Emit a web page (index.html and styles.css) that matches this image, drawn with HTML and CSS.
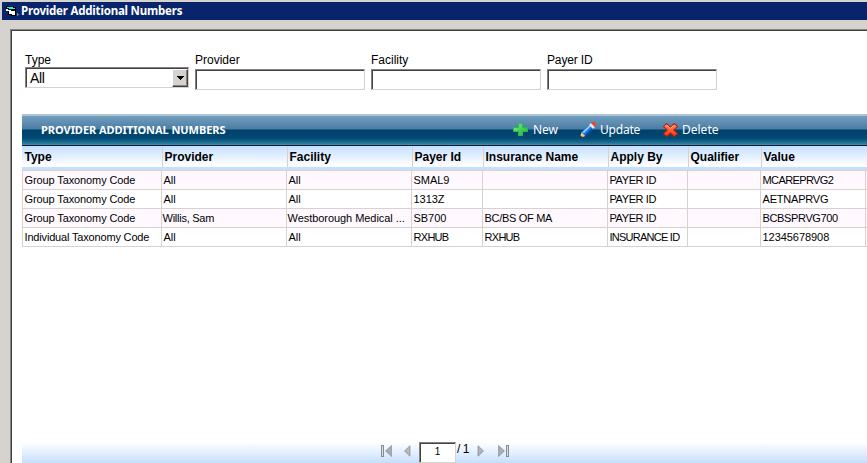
FILE: index.html
```html
<!DOCTYPE html>
<html lang="en">
<head>
<meta charset="utf-8">
<title>Provider Additional Numbers</title>
<link rel="stylesheet" href="styles.css">
</head>
<body>
<div class="window">
  <header class="titlebar">
    <svg class="app-icon" width="13" height="11" viewBox="0 0 13 11" shape-rendering="crispEdges"><path fill="#000" d="M0 0h8v1h2v9H5V9H2V5H0z"/><path fill="#0ff" d="M1 1h6v1H1zM3 2h6v1H3z"/><path fill="#fff" d="M0 3h2v1h3v1h4v4H6V8H3V5H0z"/><path fill="#848284" d="M11 7h1v1h1v1h-1v1h-1z"/></svg>
    <span>Provider Additional Numbers</span>
  </header>
  <main class="panel">
    <form class="filters">
      <div class="field type"><label>Type</label><div class="select"><span>All</span><i class="drop"><svg width="7" height="4" viewBox="0 0 7 4" shape-rendering="crispEdges"><path d="M0 0h7v1H6v1H5v1H4v1H3V3H2V2H1V1H0z"/></svg></i></div></div>
      <div class="field"><label>Provider</label><div class="input"></div></div>
      <div class="field"><label>Facility</label><div class="input"></div></div>
      <div class="field payer"><label>Payer ID</label><div class="input"></div></div>
    </form>
    <section class="grid">
      <div class="toolbar">
        <h1>PROVIDER ADDITIONAL NUMBERS</h1>
        <div class="action new"><svg width="15" height="15" viewBox="0 0 15 15"><defs><linearGradient id="g" x2="1" y2="1"><stop stop-color="#8bea8b"/><stop offset="1" stop-color="#09b528"/></linearGradient></defs><path fill="url(#g)" stroke="#28b858" d="M5.500 1.500h4v4h5v4h-5v4h-4v-4h-5v-4h5z"/></svg><span>New</span></div>
        <div class="action update"><svg width="16" height="16" viewBox="0 0 16 16"><path fill="#f2c98e" d="M1.500 10L5.500 14 1 15.500H0z"/><path fill="#1878e8" d="M1.500 10l8.500-8 4 4-8.500 8z"/><path fill="#8fd0ff" d="M2.500 10L10 2.800l1.200 1.200L3.700 11.200z"/><path fill="#0a43a8" d="M4.700 13.200l8.300-8 .8.800-8.300 8z"/><path fill="#dbe8f5" d="M9 3l2-2 4 4-2 2z"/><path fill="#f04428" d="M11 1l1-1h2.500L16 1.500V4l-1 1z"/><path fill="#222" d="M.5 13.500l2 1.500-2 1H0z"/></svg><span>Update</span></div>
        <div class="action delete"><svg width="15" height="14" viewBox="0 0 14 14" preserveAspectRatio="none"><defs><linearGradient id="r" x2="0" y2="1"><stop stop-color="#ff8a66"/><stop offset="1" stop-color="#ff3900"/></linearGradient></defs><path fill="url(#r)" stroke="#bd1a10" d="M3.500.5L7 4l3.500-3.500 3 3L10 7l3.500 3.500-3 3L7 10l-3.500 3.500-3-3L4 7 .5 3.500z"/><path stroke="#ffb49c" stroke-width=".8" fill="none" d="M2 3.500l1.500-1.500L7 5.500 10.500 2"/></svg><span>Delete</span></div>
      </div>
      <div class="row head">
        <div>Type</div><div>Provider</div><div>Facility</div><div>Payer Id</div><div>Insurance Name</div><div>Apply By</div><div>Qualifier</div><div>Value</div>
      </div>
      <div class="row odd"><div><span class="group">Group Taxonomy Code</span></div><div>All</div><div>All</div><div>SMAL9</div><div></div><div><span class="payerid">PAYER ID</span></div><div></div><div><span class="mcare">MCAREPRVG2</span></div></div>
      <div class="row"><div><span class="group">Group Taxonomy Code</span></div><div>All</div><div>All</div><div>1313Z</div><div></div><div><span class="payerid">PAYER ID</span></div><div></div><div><span class="aetna">AETNAPRVG</span></div></div>
      <div class="row odd"><div><span class="group">Group Taxonomy Code</span></div><div class="tight"><span class="willis">Willis, Sam</span></div><div class="tight">Westborough Medical ...</div><div>SB700</div><div><span class="bcbs">BC/BS OF MA</span></div><div><span class="payerid">PAYER ID</span></div><div></div><div><span class="bcbsp">BCBSPRVG700</span></div></div>
      <div class="row"><div><span class="individual">Individual Taxonomy Code</span></div><div>All</div><div>All</div><div><span class="rx">RXHUB</span></div><div><span class="rx">RXHUB</span></div><div><span class="insid">INSURANCE ID</span></div><div></div><div>12345678908</div></div>
      <footer class="pager">
        <svg class="first" width="11" height="12" viewBox="0 0 11 12"><path fill="#888b90" d="M0 0h3v12H0z"/><path fill="#d7dade" d="M1 1h1v10H1z"/><path fill="#a8abb0" stroke="#84878b" stroke-width=".6" d="M10.500.5v11L4.500 6z"/></svg>
        <svg class="prev" width="7" height="12" viewBox="0 0 7 12"><path fill="#b6b9be" stroke="#84878b" stroke-width=".7" d="M6 .8v10.400L.5 6z"/></svg>
        <div class="page">1</div><span class="total">/ 1</span>
        <svg class="next" width="7" height="12" viewBox="0 0 7 12"><path fill="#b0b3b8" stroke="#84878b" stroke-width=".7" d="M1 .8v10.400L6.500 6z"/></svg>
        <svg class="last" width="11" height="12" viewBox="0 0 11 12"><path fill="#888b90" d="M8 0h3v12H8z"/><path fill="#d7dade" d="M9 1h1v10H9z"/><path fill="#a8abb0" stroke="#84878b" stroke-width=".6" d="M.5.5v11L6.500 6z"/></svg>
      </footer>
    </section>
  </main>
</div>
</body>
</html>
```
FILE: styles.css
```css
* { box-sizing: border-box; }
body { margin: 0; background: #d6d3ce; color: #000; font-family: "Liberation Sans", Arial, sans-serif; font-size: 11px; overflow: hidden; }
svg { display: block; flex: none; }
.window { height: 463px; padding: 2px 0 0 2px; display: flex; flex-direction: column; }
.titlebar { height: 18px; flex: none; background: #08246b; color: #fff; display: flex; align-items: center; padding-left: 4px; font: bold 11.500px/18px "Noto Sans", sans-serif; white-space: nowrap; }
.titlebar span { margin-left: 2px; letter-spacing: -.2px; }
.app-icon { margin-top: 1px; }
.panel { margin: 9px 0 0 8px; flex: 1; min-height: 0; background: #fff; border: solid #848284; border-width: 1px 0 0 1px; box-shadow: inset 1px 1px #424142; display: flex; flex-direction: column; padding-left: 11px; }
.filters { display: flex; padding: 22px 0 0 3px; gap: 6px; height: 84px; flex: none; }
.field { width: 170px; }
.type { width: 164px; }
label { display: block; font-size: 12px; line-height: 17px; height: 17px; }
.type label { height: 15px; }
.payer label { letter-spacing: -.15px; }
.input { height: 21px; border: 1px solid; border-color: #848284 #d6d3ce #d6d3ce #848284; box-shadow: inset 1px 1px #424142; }
.select { height: 21px; border: 1px solid; border-color: #848284 #d6d3ce #d6d3ce #848284; box-shadow: inset 1px 1px #424142; display: flex; justify-content: space-between; padding: 1px 0 0 4px; font-size: 14px; line-height: 19px; }
.select span { letter-spacing: -.3px; }
.drop { width: 16px; height: 18px; background: #d6d3ce; border: 1px solid; border-color: #fff #424142 #424142 #fff; box-shadow: inset -1px -1px #848284; display: flex; justify-content: center; align-items: center; }
.grid { flex: 1; min-height: 0; display: flex; flex-direction: column; }
.toolbar { height: 32px; flex: none; border-bottom: 1px solid #001c38; background: linear-gradient(#adc3d6 0, #adc3d6 2px, #739ebd 2px, #4a7da5 15px, #00416b 16px, #004973 24px, #217394 29px, #4a8ead 31px); display: flex; align-items: center; color: #fff; }
h1 { margin: 0; padding-left: 19px; width: 491px; font: bold 11px/31px "Noto Sans", sans-serif; letter-spacing: -.04px; white-space: nowrap; }
.action { display: flex; align-items: center; gap: 5px; font: 12px/31px "Noto Sans", sans-serif; }
.new { width: 67px; gap: 5px; }
.new span { letter-spacing: -.1px; }
.update { width: 83px; gap: 4px; }
.update span { letter-spacing: -.2px; }
.delete { gap: 4px; }
.row { display: grid; grid-template-columns: 139px 125px 125px 71px 125px 80px 73px 105px; height: 19px; flex: none; border-bottom: 1px solid #d6d3ce; line-height: 19px; letter-spacing: -.05px; }
.row > div { border-left: 1px solid #d6d3ce; padding-left: 1.500px; white-space: nowrap; }
.row > .tight { padding-left: .5px; }
.row:not(.head) > div:last-child { border-right: 1px solid #d6d3ce; width: 106px; }
.odd { background: #fff9ff; }
.group { letter-spacing: -.11px; }
.individual { letter-spacing: -.17px; }
.payerid { letter-spacing: -.4px; }
.insid { letter-spacing: -.75px; }
.mcare { letter-spacing: -.6px; }
.aetna { letter-spacing: -.2px; }
.bcbsp { letter-spacing: -.36px; }
.bcbs { letter-spacing: -.3px; }
.rx { letter-spacing: -.7px; }
.willis { letter-spacing: -.25px; }
.head { grid-template-columns: 140px 125px 125px 71px 125px 80px 73px 104px; height: 25px; background: linear-gradient(#c6dfff 0, #fff 20px, #fff 21px, #c6dfff 21px); font-weight: bold; font-size: 12px; line-height: 22px; letter-spacing: 0; }
.head > div { height: 21px; }
.head > div:first-child { border-left-color: transparent; }
.pager { margin-top: auto; height: 21px; background: linear-gradient(#fff, #c6dfff); display: flex; padding-left: 359px; flex: none; }
.pager svg { margin-top: 3px; }
.prev { margin-left: 12px; }
.page { width: 37px; height: 21px; margin-left: 8px; background: #fff; border: 1px solid; border-color: #848284 #d6d3ce #d6d3ce #848284; box-shadow: inset 1px 1px #424142; text-align: center; font-size: 10px; line-height: 17px; }
.total { width: 21px; padding-left: 1px; font-size: 12px; line-height: 14px; letter-spacing: -.4px; }
.last { margin-left: 14px; }
```
